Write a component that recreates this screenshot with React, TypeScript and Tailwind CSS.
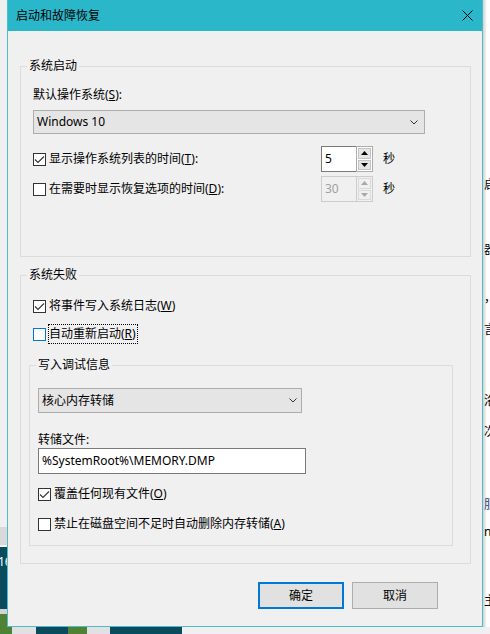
import React from "react";

function Check({ checked, focused }: { checked?: boolean; focused?: boolean }) {
  return (
    <div
      className={
        focused
          ? "w-[13px] h-[13px] shrink-0 border border-[#0078d7] bg-white flex items-center justify-center"
          : "w-[13px] h-[13px] shrink-0 border border-[#333333] bg-white flex items-center justify-center"
      }
    >
      {checked && (
        <svg width="11" height="11" viewBox="0 0 11 11">
          <path d="M1 5.5 L4 8.5 L10 2.5" stroke="#333333" strokeWidth="1.1" fill="none" />
        </svg>
      )}
    </div>
  );
}

function CheckRow({
  label,
  checked,
  focused,
  className,
}: {
  label: React.ReactNode;
  checked?: boolean;
  focused?: boolean;
  className: string;
}) {
  return (
    <div className={className}>
      <Check checked={checked} focused={focused} />
      <div
        className={
          focused
            ? "ml-[2px] h-[20px] flex items-center border border-dotted border-black pr-[1px]"
            : "ml-[2px] h-[20px] flex items-center border border-transparent pr-[1px]"
        }
      >
        {label}
      </div>
    </div>
  );
}

function Chevron() {
  return (
    <svg width="8" height="5" viewBox="0 0 8 5" className="shrink-0">
      <path d="M0.5 0.5 L4 4 L7.5 0.5" stroke="#333333" strokeWidth="1" fill="none" />
    </svg>
  );
}

function Up({ color }: { color: string }) {
  return (
    <svg width="7" height="4" viewBox="0 0 7 4">
      <path d="M0 4 L3.5 0 L7 4 Z" fill={color} />
    </svg>
  );
}
function Down({ color }: { color: string }) {
  return (
    <svg width="7" height="4" viewBox="0 0 7 4">
      <path d="M0 0 L3.5 4 L7 0 Z" fill={color} />
    </svg>
  );
}

function SpinEnabled() {
  return (
    <div className="flex h-[26px] w-[52px] shrink-0">
      <div className="w-[35px] h-full border border-r-0 border-[#7a7a7a] bg-white flex items-center pl-[3px]">5</div>
      <div className="w-[17px] h-full border border-[#adadad] bg-white p-[1px] flex flex-col gap-[1px]">
        <div className="flex-1 bg-[#e5e5e5] border border-[#c4c4c4] flex items-center justify-center">
          <Up color="#000000" />
        </div>
        <div className="flex-1 bg-[#e5e5e5] border border-[#c4c4c4] flex items-center justify-center">
          <Down color="#000000" />
        </div>
      </div>
    </div>
  );
}

function SpinDisabled() {
  return (
    <div className="flex h-[26px] w-[52px] shrink-0">
      <div className="w-[35px] h-full border border-r-0 border-[#cccccc] bg-[#f0f0f0] text-[#a0a0a0] flex items-center pl-[3px]">
        30
      </div>
      <div className="w-[17px] h-full border border-[#cccccc] bg-[#f0f0f0] p-[1px] flex flex-col gap-[1px]">
        <div className="flex-1 bg-[#f0f0f0] border border-[#dadada] flex items-center justify-center">
          <Up color="#a8a8a8" />
        </div>
        <div className="flex-1 bg-[#f0f0f0] border border-[#dadada] flex items-center justify-center">
          <Down color="#a8a8a8" />
        </div>
      </div>
    </div>
  );
}

function Legend({ children }: { children: React.ReactNode }) {
  return <div className="-mt-[9px] ml-[6px] px-[2px] bg-[#f0f0f0] self-start h-[16px] leading-[16px]">{children}</div>;
}

function Dialog() {
  return (
    <div className="w-[476px] h-[627px] shrink-0 border border-t-0 border-[#4dbace] bg-[#f0f0f0] flex flex-col">
      {/* title bar */}
      <div className="h-[31px] shrink-0 bg-[#2bb7ca] flex items-center justify-between pl-[8px] pr-[9px]">
        <span>启动和故障恢复</span>
        <svg width="11" height="11" viewBox="0 0 11 11">
          <path d="M0.5 0.5 L10.5 10.5 M10.5 0.5 L0.5 10.5" stroke="#000000" strokeWidth="1" />
        </svg>
      </div>

      <div className="flex flex-col pl-[12px] pr-[11px]">
        {/* 系统启动 */}
        <div className="mt-[35px] border border-[#dcdcdc] flex flex-col pb-[54px]">
          <Legend>系统启动</Legend>
          <div className="ml-[12px] mt-[13px] h-[16px]">
            默认操作系统(<span className="underline">S</span>):
          </div>
          <div className="ml-[12px] mt-[7px] w-[392px] h-[24px] border border-[#adadad] bg-[#e5e5e5] flex items-center pl-[3px] pr-[6px]">
            <span className="flex-1">Windows 10</span>
            <Chevron />
          </div>
          <div className="ml-[12px] mt-[12px] h-[26px] flex items-center">
            <CheckRow
              className="w-[288px] flex items-center"
              checked
              label={
                <span>
                  显示操作系统列表的时间(<span className="underline">T</span>):
                </span>
              }
            />
            <SpinEnabled />
            <span className="ml-[10px]">秒</span>
          </div>
          <div className="ml-[12px] mt-[4px] h-[26px] flex items-center">
            <CheckRow
              className="w-[288px] flex items-center"
              label={
                <span>
                  在需要时显示恢复选项的时间(<span className="underline">D</span>):
                </span>
              }
            />
            <SpinDisabled />
            <span className="ml-[10px]">秒</span>
          </div>
        </div>

        {/* 系统失败 */}
        <div className="mt-[18px] border border-[#dcdcdc] flex flex-col pb-[17px]">
          <Legend>系统失败</Legend>
          <CheckRow
            className="ml-[12px] mt-[13px] h-[20px] flex items-center"
            checked
            label={
              <span>
                将事件写入系统日志(<span className="underline">W</span>)
              </span>
            }
          />
          <CheckRow
            className="ml-[12px] mt-[8px] h-[20px] flex items-center"
            focused
            label={
              <span>
                自动重新启动(<span className="underline">R</span>)
              </span>
            }
          />

          {/* 写入调试信息 */}
          <div className="mt-[21px] ml-[8px] mr-[17px] border border-[#dcdcdc] flex flex-col pb-[11px]">
            <Legend>写入调试信息</Legend>
            <div className="ml-[8px] mt-[15px] w-[264px] h-[25px] border border-[#adadad] bg-[#e5e5e5] flex items-center pl-[3px] pr-[4px]">
              <span className="flex-1">核心内存转储</span>
              <Chevron />
            </div>
            <div className="ml-[8px] mt-[19px] h-[16px]">转储文件:</div>
            <div className="ml-[8px] w-[268px] h-[26px] border border-[#7a7a7a] bg-white flex items-center pl-[3px]">
              %SystemRoot%\MEMORY.DMP
            </div>
            <CheckRow
              className="ml-[8px] mt-[10px] h-[20px] flex items-center"
              checked
              label={
                <span>
                  覆盖任何现有文件(<span className="underline">O</span>)
                </span>
              }
            />
            <CheckRow
              className="ml-[8px] mt-[10px] h-[20px] flex items-center"
              label={
                <span>
                  禁止在磁盘空间不足时自动删除内存转储(<span className="underline">A</span>)
                </span>
              }
            />
          </div>
        </div>

        {/* buttons */}
        <div className="mt-[18px] flex justify-end gap-[8px] pr-[33px]">
          <div className="w-[86px] h-[27px] border-2 border-[#0078d7] bg-[#e1e1e1] flex items-center justify-center">
            确定
          </div>
          <div className="w-[86px] h-[27px] border border-[#adadad] bg-[#e1e1e1] flex items-center justify-center">
            取消
          </div>
        </div>
      </div>
    </div>
  );
}

function LeftStrip() {
  return (
    <div className="w-[7px] shrink-0 flex flex-col overflow-hidden">
      <div className="h-[527px] bg-[#f0f0f0]" />
      <div className="h-[18px] bg-[#d9d9d9]" />
      <div className="h-[2px] bg-[#f5f5f5]" />
      <div className="h-[62px] bg-[#0b4b5e] text-white pt-[7px] whitespace-nowrap">
        <span className="-ml-[2px]">16</span>
      </div>
      <div className="h-[5px] bg-[#d4d4d4]" />
      <div className="h-[13px] bg-[#4f8235]" />
    </div>
  );
}

const frags: { t: string; top: number; c?: string }[] = [
  { t: "启", top: 177 },
  { t: "器", top: 242 },
  { t: "，", top: 290 },
  { t: "言", top: 322 },
  { t: "洛", top: 393 },
  { t: "次", top: 424 },
  { t: "服", top: 497, c: "#1f3d7a" },
  { t: "n", top: 524 },
  { t: "主", top: 593 },
];

function RightStrip() {
  return (
    <div className="w-[7px] shrink-0 relative overflow-hidden bg-[linear-gradient(to_right,#d0d0d0,#ffffff_4px)]">
      {frags.map((f) => (
        <span
          key={f.top}
          className="absolute left-[1px] whitespace-nowrap"
          style={{ top: f.top, color: f.c ?? "#000000" }}
        >
          {f.t}
        </span>
      ))}
    </div>
  );
}

function BottomStrip() {
  return (
    <div className="h-[7px] flex shrink-0">
      <div className="w-[12px] bg-[#4f8235]" />
      <div className="w-[24px] bg-[#e1e1e1]" />
      <div className="w-[32px] bg-[#0b4b5e]" />
      <div className="w-[19px] bg-[#4f8235]" />
      <div className="w-[23px] bg-[#e1e1e1]" />
      <div className="w-[72px] bg-[#0b4b5e]" />
      <div className="flex-1 bg-[#f0f0f0]" />
    </div>
  );
}

export default function App() {
  return (
    <div className="w-[490px] h-[634px] overflow-hidden flex flex-col bg-white text-black text-[12px] leading-[16px] font-['Noto_Sans','Noto_Sans_CJK_SC',sans-serif]">
      <div className="flex h-[627px] shrink-0">
        <LeftStrip />
        <Dialog />
        <RightStrip />
      </div>
      <BottomStrip />
    </div>
  );
}
